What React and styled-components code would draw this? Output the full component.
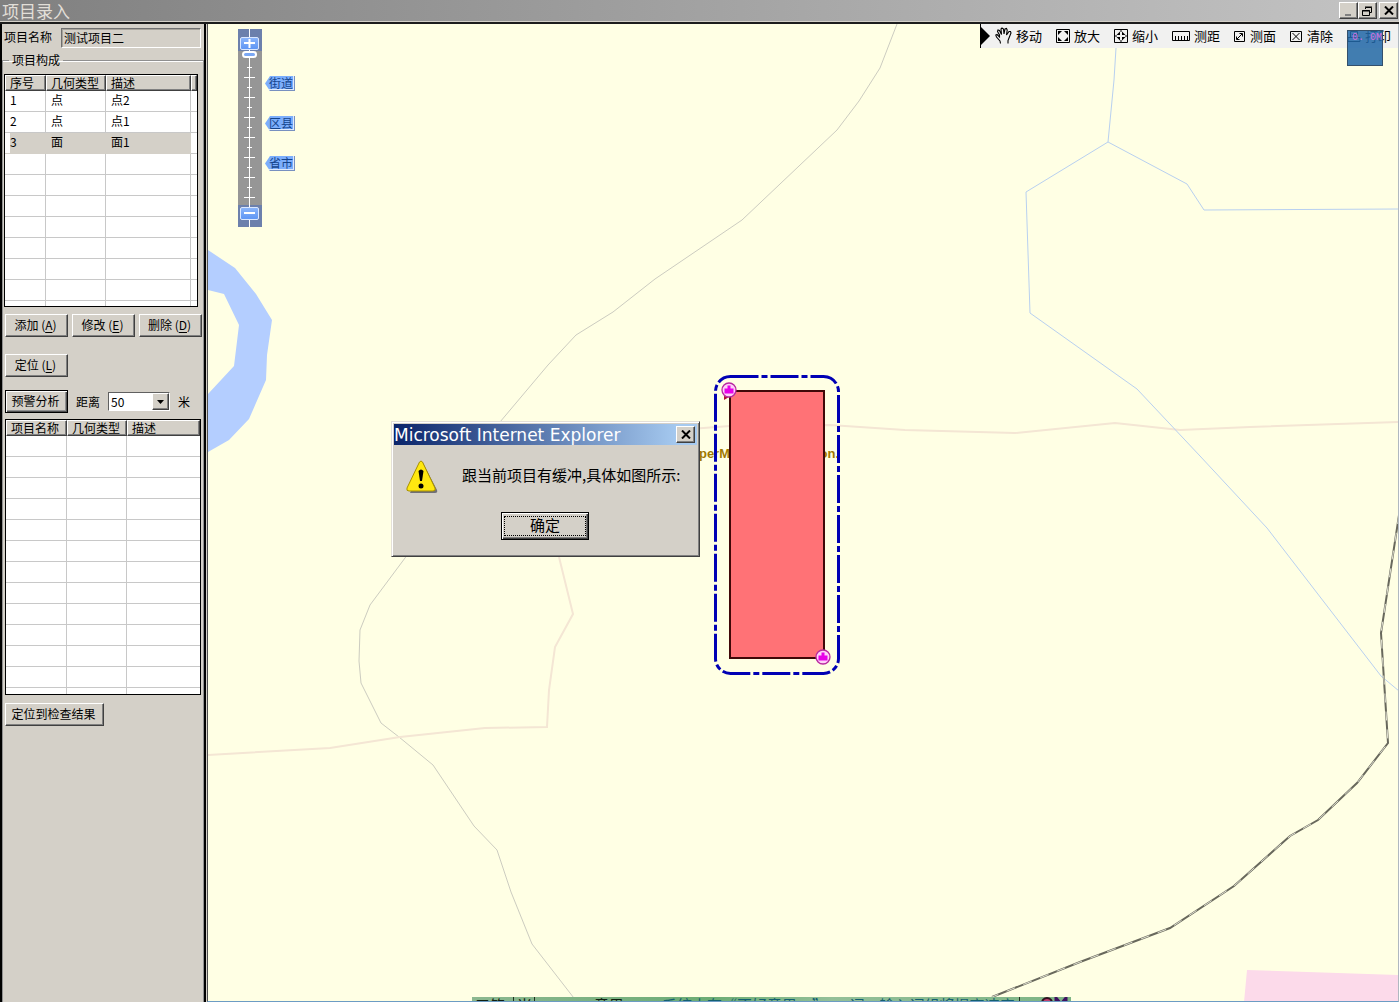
import React, { useState } from "react";
import styled, { createGlobalStyle, css } from "styled-components";

const face = "#d4d0c8";
const cjk = '"Noto Sans CJK SC", "Liberation Sans", sans-serif';

const GlobalStyle = createGlobalStyle`
  *, *::before, *::after { box-sizing: border-box; }
  html, body { margin: 0; height: 100%; }
  body { font: 12px/16px ${cjk}; color: #000; background: ${face}; overflow: hidden; }
  button, input, select { font: inherit; color: inherit; margin: 0; }
`;

const raised = css`
  border: 1px solid;
  border-color: #fff #404040 #404040 #fff;
  box-shadow: inset -1px -1px 0 #808080;
`;

const Window = styled.div`
  display: flex;
  flex-direction: column;
  height: 100vh;
`;

const TitleBar = styled.header`
  display: flex;
  align-items: center;
  justify-content: space-between;
  height: 22px;
  padding: 0 1px 0 2px;
  background: linear-gradient(90deg, #808080, #c4c4c4);
  border-bottom: 1px solid #d4d0c8;
`;

const Title = styled.h1`
  margin: 0;
  font-size: 17px;
  line-height: 20px;
  font-weight: 400;
  color: #e2dfd8;
`;

const WindowButtons = styled.div`
  display: flex;
  button:last-child { margin-left: 2px; }
`;

const CaptionButton = styled.button`
  ${raised}
  width: 19px;
  height: 17px;
  padding: 0;
  display: grid;
  place-items: center;
  background: ${face};
`;

const Body = styled.div`
  flex: 1;
  min-height: 0;
  display: flex;
  border-top: 2px solid #1c1c1c;
`;

const Sidebar = styled.aside`
  flex: none;
  width: 206px;
  display: flex;
  flex-direction: column;
  background: ${face};
  border: solid #000;
  border-width: 0 2px;
`;

const NameRow = styled.div`
  display: flex;
  align-items: center;
  gap: 9px;
  padding: 4px 3px 4px 2px;
  label { margin-top: -2px; }
`;

const NameInput = styled.input`
  flex: 1;
  min-width: 0;
  height: 20px;
  padding: 0 2px 2px;
  background: ${face};
  border: 1px solid;
  border-color: #707070 #fff #fff #707070;
  box-shadow: inset 1px 1px 0 #a8a49c;
  outline: none;
`;

const Group = styled.fieldset`
  flex: 1;
  min-width: 0;
  margin: 0;
  padding: 6px 0 0 1px;
  border: 1px solid #909090;
  border-bottom: 0;
  box-shadow: inset 0 1px 0 #fff;
`;

const Legend = styled.legend`
  margin-left: 5px;
  padding: 0 3px;
`;

const ListBox = styled.div`
  height: ${(p) => p.$height}px;
  margin: 0 ${(p) => p.$right}px 0 ${(p) => p.$left}px;
  overflow: hidden;
  background: #fff;
  border: 1px solid #000;
`;

const Table = styled.table`
  width: 100%;
  table-layout: fixed;
  border-collapse: separate;
  border-spacing: 0;
`;

const HeadCell = styled.th`
  ${raised}
  height: 16px;
  padding: 0 0 0 4px;
  line-height: 14px;
  font-weight: 400;
  text-align: left;
  white-space: nowrap;
  background: ${face};
`;

const Cell = styled.td`
  height: 21px;
  padding: 0 0 2px 5px;
  line-height: 16px;
  border: solid #c8c8c8;
  border-width: 0 1px 1px 0;
  &:last-child { border-right: 0; }
`;

const Row = styled.tr`
  ${(p) => p.$selected && css`
    td:not(:last-child) { background: ${face}; border-color: ${face}; }
    td:first-child { background: linear-gradient(90deg, #fff 5px, ${face} 5px); }
  `}
`;

const Controls = styled.div`
  display: flex;
  align-items: center;
  gap: ${(p) => p.$gap || 4}px;
  padding-left: 1px;
  margin: ${(p) => p.$top}px 0 ${(p) => p.$bottom || 0}px;
`;

const Button = styled.button`
  ${raised}
  flex: none;
  width: ${(p) => (p.$wide ? 99 : 63)}px;
  height: 23px;
  padding: 0 2px 2px 0;
  line-height: 18px;
  white-space: nowrap;
  background: ${face};
  ${(p) => p.$default && css`
    border-color: #000;
    box-shadow: inset 1px 1px 0 #fff, inset -1px -1px 0 #505050, inset -2px -2px 0 #909090;
  `}
  u { text-underline-offset: 2px; }
`;

const SelectBox = styled.div`
  display: flex;
  position: relative;
  width: 62px;
  height: 19px;
  border: 1px solid;
  border-color: #606060 #fff #fff #606060;
  background: #fff;
  select {
    flex: 1;
    width: 100%;
    padding: 0 0 0 2px;
    appearance: none;
    border: 0;
    background: none;
    line-height: 16px;
    outline: none;
  }
`;

const SelectArrow = styled.span`
  ${raised}
  flex: none;
  width: 17px;
  display: grid;
  place-items: center;
  background: ${face};
  pointer-events: none;
`;

const MapPane = styled.main`
  position: relative;
  flex: 1;
  min-width: 0;
  margin-left: 1px;
  overflow: hidden;
  background: #ffffe4;
  border-left: 1px solid #505050;
  border-right: 1px solid #b0b8c0;
  border-bottom: 1px solid #6c9cc4;
`;

const MapDrawing = styled.svg`
  position: absolute;
  left: 0;
  top: 0;
  width: 1191px;
  height: 978px;
`;

const ToolBar = styled.nav`
  position: absolute;
  right: 0;
  top: 0;
  display: flex;
  align-items: center;
  gap: 14px;
  height: 24px;
  padding: 0 7px 0 14px;
  background: #f1f1f0;
  border-left: 1px solid #000;
`;

const ToolArrow = styled.svg`
  position: absolute;
  left: 0;
  top: 3px;
`;

const Tool = styled.button`
  display: flex;
  align-items: center;
  gap: 4px;
  padding: 0;
  border: 0;
  background: none;
  font-size: 13px;
  line-height: 18px;
`;

const Overview = styled.div`
  position: absolute;
  right: 15px;
  top: 6px;
  width: 36px;
  height: 36px;
  padding-left: 4px;
  font: 10px/14px "Liberation Mono", monospace;
  white-space: nowrap;
  color: #d070e0;
  background: rgba(34, 104, 168, 0.86);
  border: 1px solid #34506c;
`;

const Zoomer = styled.div`
  position: absolute;
  left: 30px;
  top: 5px;
  display: flex;
  flex-direction: column;
  align-items: center;
  width: 24px;
  height: 198px;
  padding: 8px 1px 7px 0;
  background:
    linear-gradient(#fff, #fff) 11px 0 / 1px 100% no-repeat,
    linear-gradient(#6c80ac 22px, #969696 22px, #969696 176px, #6c80ac 176px);
`;

const ZoomButton = styled.button`
  display: grid;
  place-items: center;
  width: 19px;
  height: 13px;
  padding: 0;
  border: 1px solid #dbe8ff;
  border-radius: 2px;
  background: linear-gradient(#8ab4fa, #5f96f4);
`;

const ZoomRange = styled.input`
  flex: 1;
  min-height: 0;
  width: 23px;
  padding-top: 1px;
  appearance: none;
  writing-mode: vertical-lr;
  direction: rtl;
  background:
    repeating-linear-gradient(transparent 0 17px, #fff 17px 18px, transparent 18px 20px) 9px 0 / 5px 150px no-repeat,
    repeating-linear-gradient(transparent 0 7px, #fff 7px 8px, transparent 8px 20px) 6px 20px / 11px 130px no-repeat;
  &::-webkit-slider-thumb {
    appearance: none;
    width: 15px;
    height: 7px;
    border: 2px solid #fff;
    border-radius: 4px;
    background: #7ba8f4;
  }
`;

const LevelTags = styled.div`
  position: absolute;
  left: 57px;
  top: 52px;
  display: flex;
  flex-direction: column;
  gap: 25px;
`;

const LevelTag = styled.button`
  width: 30px;
  height: 15px;
  padding: 0 0 1px 2px;
  border: 0;
  line-height: 14px;
  color: #14448c;
  background: #7caefc;
  box-shadow: inset -1px -1px 0 #7890c0, inset -2px -2px 0 #dce8fc;
  clip-path: polygon(0 50%, 5px 0, 100% 0, 100% 100%, 5px 100%);
`;

const Dialog = styled.section`
  position: absolute;
  left: 183px;
  top: 397px;
  width: 309px;
  height: 136px;
  padding: 2px;
  background: ${face};
  border: 1px solid;
  border-color: #e4e0d8 #404040 #404040 #e4e0d8;
  box-shadow: inset 1px 1px 0 #fff, inset -1px -1px 0 #808080;
`;

const DialogTitle = styled.div`
  display: flex;
  align-items: center;
  justify-content: space-between;
  height: 21px;
  padding: 0 2px 0 0;
  color: #fff;
  font: 17px/20px "DejaVu Sans", sans-serif;
  background: linear-gradient(90deg, #0a246a, #a6caf0 94%);
  h2 { margin: 0; font: inherit; white-space: nowrap; }
`;

const DialogMessage = styled.div`
  display: flex;
  align-items: center;
  gap: 24px;
  padding: 15px 12px 0;
  font-size: 15px;
  line-height: 20px;
  p { margin: 0 0 4px; white-space: nowrap; }
`;

const DialogButton = styled.button`
  display: block;
  width: 88px;
  height: 28px;
  margin: 19px 0 0 107px;
  padding: 2px;
  font-size: 15px;
  line-height: 16px;
  background: ${face};
  border: 1px solid #000;
  box-shadow: inset 1px 1px 0 #fff, inset -1px -1px 0 #404040, inset -2px -2px 0 #808080;
  span { display: block; height: 20px; border: 1px dotted #000; }
`;

const ImeBar = styled.footer`
  position: absolute;
  left: 264px;
  bottom: -1px;
  display: flex;
  align-items: flex-start;
  width: 599px;
  height: 5px;
  overflow: hidden;
  font-size: 15px;
  line-height: 15px;
  white-space: nowrap;
  color: #000;
  background: linear-gradient(90deg, #8cb890, #6cac74 40%, #94c098 60%, #7cb484);
`;

const ImeCell = styled.span`
  flex: none;
  width: ${(p) => p.$width}px;
  height: 15px;
  padding-left: 3px;
  color: ${(p) => (p.$hint ? "#146070" : "#102010")};
  border-right: ${(p) => (p.$line ? "1px solid #203020" : "0")};
`;

const icons = {
  move: (
    <svg width="17" height="18" viewBox="0 0 17 18" fill="none" stroke="#000" strokeWidth="1.1">
      <path d="M5.500 16.500 5 14 1.500 10 .8 8 2 7.500 4.500 10V8L2.500 4.500 3 3 4.500 3.500 6.500 7.500 6 2 7 1 8.500 2 9 7 10 2 11.500 1.500 12.200 3 11.500 8 14 4.500 15.500 4.500 16 6 14 11 13 13.500v3" />
    </svg>
  ),
  zoomIn: (
    <svg width="14" height="15" viewBox="0 0 14 15" fill="none" stroke="#000">
      <path d="M.5.5h13v13H.5z" />
      <path fill="#000" stroke="none" d="M2 2h4L2 6zM12 2H8l4 4zM2 12h4L2 8zM12 12H8l4-4z" />
    </svg>
  ),
  zoomOut: (
    <svg width="14" height="15" viewBox="0 0 14 15" fill="none" stroke="#000">
      <path d="M.5.5h13v13H.5zM7 1v2M7 11v2M1 7h2M11 7h2" />
      <path fill="#000" stroke="none" d="M6 6V2.500L2.500 6zM8 6V2.500L11.500 6zM6 8v3.500L2.500 8zM8 8v3.500L11.500 8z" />
    </svg>
  ),
  distance: (
    <svg width="18" height="12" viewBox="0 0 18 12" fill="none" stroke="#000">
      <path d="M.5 1.500h17v9H.5zM3.500 10V6M6.500 10V6M9.500 10V6M12.500 10V6M15.500 10V6" />
    </svg>
  ),
  area: (
    <svg width="12" height="13" viewBox="0 0 12 13" fill="none" stroke="#000">
      <path d="M.5 1.500h10v10H.5zM3 9l5-5M5.500 3.500h3v3M2.500 6.500v3h3" />
    </svg>
  ),
  clear: (
    <svg width="13" height="13" viewBox="0 0 13 13" fill="none" stroke="#000">
      <path d="M.5 1.500h11v10H.5zM2.500 3l7 7M9.500 3l-7 7" />
    </svg>
  ),
  print: (
    <svg width="14" height="13" viewBox="0 0 14 13" fill="none" stroke="#000">
      <path d="M3.500 1.500h7v6h-7zM1 7.500h12v4H1zM5 4.500h4" />
    </svg>
  ),
};

const tools = [
  ["move", "移动"],
  ["zoomIn", "放大"],
  ["zoomOut", "缩小"],
  ["distance", "测距"],
  ["area", "测面"],
  ["clear", "清除"],
  ["print", "打印"],
];

const members = [
  ["1", "点", "点2"],
  ["2", "点", "点1"],
  ["3", "面", "面1"],
];

function Grid({ label, columns, widths, rows, count, selected, onSelect }) {
  return (
    <Table aria-label={label}>
      <colgroup>
        {widths.map((w, i) => <col key={i} style={w ? { width: w } : undefined} />)}
      </colgroup>
      <thead>
        <tr>{columns.map((c, i) => <HeadCell key={i}>{c}</HeadCell>)}</tr>
      </thead>
      <tbody>
        {Array.from({ length: count }, (_, r) => (
          <Row key={r} $selected={r === selected} onClick={() => rows[r] && onSelect(r)}>
            {columns.map((_, c) => <Cell key={c}>{rows[r]?.[c]}</Cell>)}
          </Row>
        ))}
      </tbody>
    </Table>
  );
}

function CloseGlyph() {
  return (
    <svg width="10" height="9" viewBox="0 0 10 9" stroke="#000" strokeWidth="2">
      <path d="M1 .5 9 8.500M9 .5 1 8.500" />
    </svg>
  );
}

function Pin({ x, y, tail }) {
  return (
    <g transform={`translate(${x} ${y})`}>
      {tail && <path d="M-5 10V6l5 1z" fill="#b01030" />}
      <circle r="7" fill="#ffd0f8" stroke="#b828a0" strokeWidth="1.3" />
      <path d="M-1.500-4.500h3v3h3v5h-9v-5h3z" fill="#e800e8" />
    </g>
  );
}

function RegionMap() {
  const rail = "1399,515 1381,633 1388,743 1357,783 1318,820 1290,836 1234,886 1170,928 1080,962 992,997";
  return (
    <MapDrawing viewBox="208 24 1191 978" fill="none" aria-label="地图">
      <path fill="#b4ceff" d="M208 250 235 268 256 294 272 320 267 355 266 380 249 419 229 440 208 452V394L234 366 239 325 224 294 208 290z" />
      <path fill="#fcdaea" d="M1247 970 1399 975V1002H1244z" />
      <g stroke="#ccccc0">
        <path d="M897 24 880 68 859 101 837 130 742 220 655 279 613 312 576 335 548 365 500 422 405 558 370 605 360 630 359 661 361 683 381 723 399 737 433 765 474 826 497 850 511 892 532 944 577 1002" />
      </g>
      <g stroke="#f4e6d4" strokeWidth="2">
        <path d="M208 755 330 748 400 737 485 728 547 727 549 690 555 647 573 614 559 557" />
        <path d="M690 429 730 426 830 425 905 430 1015 433 1115 423 1180 430 1250 427 1399 422" />
      </g>
      <g stroke="#b8d0f0">
        <path d="M1116 48 1114 80 1108 142 1026 192 1030 313 1137 389 1200 456 1267 528 1381 676 1399 691" />
        <path d="M1108 142 1187 184 1204 210 1399 209" />
      </g>
      <polyline points={rail} stroke="#68685c" strokeWidth="2" />
      <polyline points={rail} stroke="#fffff0" strokeWidth="0.8" strokeDasharray="9 9" />
      <g fill="#a07800" fontFamily="Liberation Sans, sans-serif" fontSize="13" fontWeight="700" textAnchor="end">
        <text x="730" y="458">SuperM</text>
        <text x="839" y="458">Corporation.</text>
      </g>
      <rect x="730" y="391" width="94" height="267" fill="#ff7276" stroke="#400808" strokeWidth="2" />
      <rect x="715.500" y="376.500" width="123" height="297" rx="15" stroke="#0000b4" strokeWidth="3" strokeDasharray="28 3 6 3" />
      <Pin x={729} y={390} tail />
      <Pin x={823} y={657} />
    </MapDrawing>
  );
}

export default function App() {
  const [selected, setSelected] = useState(2);
  const [open, setOpen] = useState(true);

  return (
    <Window>
      <GlobalStyle />
      <TitleBar>
        <Title>项目录入</Title>
        <WindowButtons>
          <CaptionButton aria-label="最小化">
            <svg width="11" height="10" viewBox="0 0 11 10"><path d="M2 8h6v2H2z" fill="#808080" /></svg>
          </CaptionButton>
          <CaptionButton aria-label="还原">
            <svg width="11" height="10" viewBox="0 0 11 10" fill="none" stroke="#000">
              <path d="M3.500 3V1.500h6v5H8M3 1h7M.5 4.500h7v5h-7zM0 5h8" />
            </svg>
          </CaptionButton>
          <CaptionButton aria-label="关闭"><CloseGlyph /></CaptionButton>
        </WindowButtons>
      </TitleBar>

      <Body>
        <Sidebar>
          <NameRow>
            <label htmlFor="project">项目名称</label>
            <NameInput id="project" defaultValue="测试项目二" />
          </NameRow>
          <Group>
            <Legend>项目构成</Legend>
            <ListBox $height={233} $left={0} $right={5}>
              <Grid
                label="项目构成"
                columns={["序号", "几何类型", "描述", ""]}
                widths={[41, 60, 85, 0]}
                rows={members}
                count={11}
                selected={selected}
                onSelect={setSelected}
              />
            </ListBox>
            <Controls $top={7}>
              <Button>添加 (<u>A</u>)</Button>
              <Button>修改 (<u>E</u>)</Button>
              <Button>删除 (<u>D</u>)</Button>
            </Controls>
            <Controls $top={17}>
              <Button>定位 (<u>L</u>)</Button>
            </Controls>
            <Controls $top={13} $bottom={6} $gap={8}>
              <Button $default>预警分析</Button>
              <label htmlFor="distance">距离</label>
              <SelectBox>
                <select id="distance" defaultValue="50">
                  <option>50</option>
                  <option>100</option>
                </select>
                <SelectArrow>
                  <svg width="7" height="4" viewBox="0 0 7 4"><path d="M0 0h7L3.500 4z" /></svg>
                </SelectArrow>
              </SelectBox>
              <span>米</span>
            </Controls>
            <ListBox $height={276} $left={1} $right={2}>
              <Grid
                label="检查结果"
                columns={["项目名称", "几何类型", "描述"]}
                widths={[61, 60, 0]}
                rows={[]}
                count={13}
              />
            </ListBox>
            <Controls $top={8}>
              <Button $wide>定位到检查结果</Button>
            </Controls>
          </Group>
        </Sidebar>

        <MapPane>
          <RegionMap />
          <Zoomer>
            <ZoomButton aria-label="放大地图">
              <svg width="11" height="9" viewBox="0 0 11 9"><path d="M0 4h11M5.500 0v9" stroke="#fff" strokeWidth="2" /></svg>
            </ZoomButton>
            <ZoomRange type="range" aria-label="缩放级别" min="0" max="14" defaultValue="14" />
            <ZoomButton aria-label="缩小地图">
              <svg width="11" height="9" viewBox="0 0 11 9"><path d="M0 4h11" stroke="#fff" strokeWidth="2" /></svg>
            </ZoomButton>
          </Zoomer>
          <LevelTags>
            <LevelTag>街道</LevelTag>
            <LevelTag>区县</LevelTag>
            <LevelTag>省市</LevelTag>
          </LevelTags>

          <ToolBar>
            <ToolArrow width="10" height="18" viewBox="0 0 10 18"><path d="M0 0 9 9 0 18z" /></ToolArrow>
            {tools.map(([icon, label]) => (
              <Tool key={icon}>{icons[icon]}{label}</Tool>
            ))}
          </ToolBar>
          <Overview>0. 0M</Overview>

          {open && (
            <Dialog role="dialog" aria-labelledby="alert-title">
              <DialogTitle>
                <h2 id="alert-title">Microsoft Internet Explorer</h2>
                <CaptionButton aria-label="关闭提示" onClick={() => setOpen(false)}><CloseGlyph /></CaptionButton>
              </DialogTitle>
              <DialogMessage>
                <svg width="32" height="33" viewBox="0 0 32 33">
                  <path d="M17 3 31 30q1 3-2 3H4z" fill="#707078" />
                  <path d="M13.500 2Q15 0 16.500 2L29 28q1 3-2 3H3q-3 0-2-3z" fill="#ffe810" stroke="#a89000" />
                  <path d="M12.500 11q2.500-3 5 0l-1.500 10h-2z" />
                  <circle cx="15" cy="26" r="2.500" />
                </svg>
                <p>跟当前项目有缓冲,具体如图所示:</p>
              </DialogMessage>
              <DialogButton onClick={() => setOpen(false)}><span>确定</span></DialogButton>
            </Dialog>
          )}

          <ImeBar>
            <ImeCell $width={42} $line>五笔</ImeCell>
            <ImeCell $width={21} $line>米</ImeCell>
            <ImeCell $width={56} />
            <ImeCell $width={68}>意思</ImeCell>
            <ImeCell $width={361} $hint $line>系统中有“不好意思　”　一词，输入词组将提高速度</ImeCell>
            <svg width="50" height="12" viewBox="0 0 50 12">
              <circle cx="27" cy="6" r="5" fill="#c04070" stroke="#301020" strokeWidth="2" />
              <path d="M36 12V1l5 6 5-6v11" fill="none" stroke="#401060" strokeWidth="3" />
            </svg>
          </ImeBar>
        </MapPane>
      </Body>
    </Window>
  );
}
